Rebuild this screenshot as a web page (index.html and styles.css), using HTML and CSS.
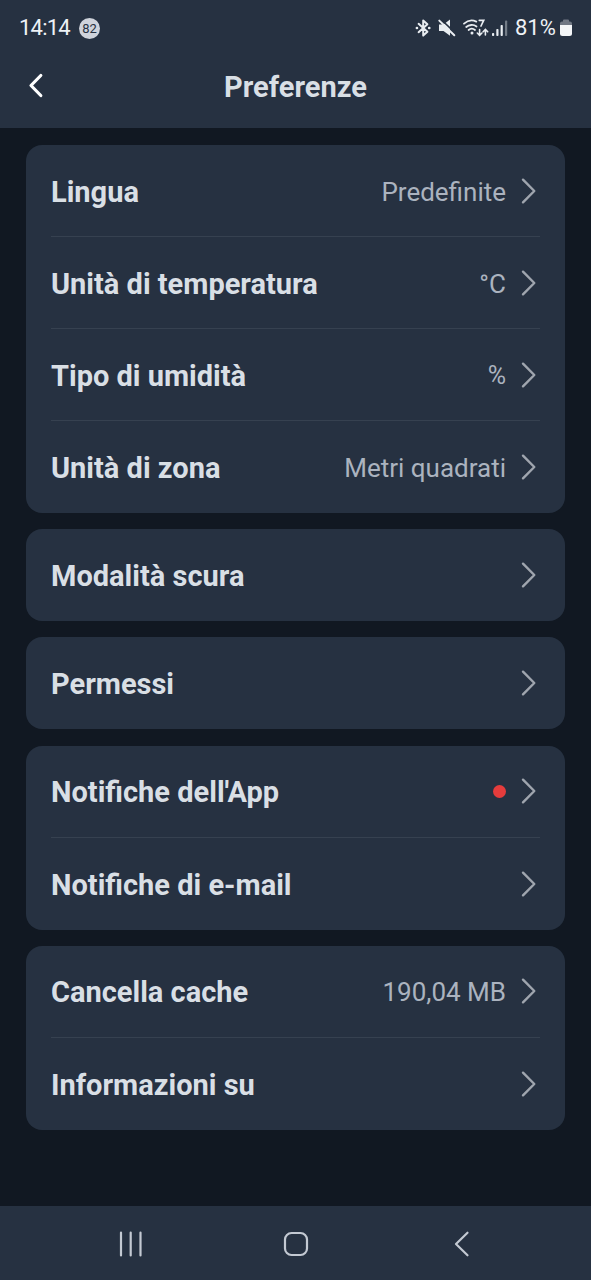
FILE: index.html
```html
<!DOCTYPE html>
<html lang="it">
<head>
<meta charset="utf-8">
<title>Preferenze</title>
<link rel="stylesheet" href="styles.css">
</head>
<body>
<svg class="defs" width="0" height="0" aria-hidden="true">
  <symbol id="chevron" viewBox="0 0 16 26"><path d="M2 1.700 13.300 13 2 24.300"/></symbol>
</svg>
<div class="screen">
  <header class="top">
    <div class="status">
      <span class="clock">14:14</span>
      <span class="badge">82</span>
      <svg class="status-icons" width="94" height="22" viewBox="0 0 94 22">
        <g fill="none" stroke="#e9edf1" stroke-width="2" stroke-linejoin="round" stroke-linecap="round">
          <path d="M3.600 6.800 12.400 14.800 8.200 18.600V3.400L12.400 7.200 3.600 15.200"/>
          <path d="M1.900 11h.1M14.200 11h.1" stroke-width="2.600"/>
        </g>
        <path fill="#e9edf1" d="M24 7.500h4.500l6.500-5v16.300l-6.500-4.800H24z"/>
        <path d="M25.600 2 41.500 17.200" stroke="#263141" stroke-width="1.600"/>
        <path d="M24.300 3.600 39.300 18.300" stroke="#e9edf1" stroke-width="2" stroke-linecap="round"/>
        <g fill="none" stroke="#e9edf1" stroke-width="1.800" stroke-linecap="round">
          <path d="M49 6.700C52.500 3.500 57.500 2.800 61.300 4.600M51.200 10C54 7.600 58.500 7.200 61.500 9.500M53.600 13C55.500 11.400 58 11.400 60 13"/>
          <path d="M64.300 3.300h4.400L66 9" stroke-width="1.700"/>
          <path d="M64.600 12.500v5.500M62.300 16l2.300 2.300 2.300-2.300M70.400 18v-5.500M68.100 14.800l2.300-2.300 2.300 2.300" stroke-width="1.600"/>
        </g>
        <circle cx="57" cy="16" r="1.500" fill="#e9edf1"/>
        <g fill="#e9edf1">
          <rect x="77" y="16" width="2.200" height="3" rx=".8"/><rect x="81.300" y="12" width="2.200" height="7" rx=".8"/><rect x="85.600" y="8" width="2.200" height="11" rx=".8"/><rect x="90" y="3.500" width="2.200" height="15.500" rx=".8" opacity=".4"/>
        </g>
      </svg>
      <span class="percent">81%</span>
      <svg class="battery" width="14" height="18" viewBox="0 0 14 18">
        <path fill="#707783" d="M1 6V4.500Q1 2.500 3 2.500h1V1.500Q4 .5 5 .5h4q1 0 1 1v1h1q2 0 2 2V6z"/>
        <path fill="#f3f5f7" d="M1 6h12v8.500q0 2.500-2.500 2.500h-7Q1 17 1 14.500z"/>
      </svg>
    </div>
    <div class="titlebar">
      <svg class="back" width="16" height="26" viewBox="0 0 16 26"><path d="M12.800 2.500 3 12.500l9.800 10"/></svg>
      <h1>Preferenze</h1>
    </div>
  </header>
  <main class="content">
    <section class="card">
      <div class="row"><span class="label">Lingua</span><span class="value">Predefinite</span><svg class="chev"><use href="#chevron"/></svg></div>
      <div class="row"><span class="label">Unità di temperatura</span><span class="value">°C</span><svg class="chev"><use href="#chevron"/></svg></div>
      <div class="row"><span class="label">Tipo di umidità</span><span class="value percent-sign">%</span><svg class="chev"><use href="#chevron"/></svg></div>
      <div class="row"><span class="label">Unità di zona</span><span class="value">Metri quadrati</span><svg class="chev"><use href="#chevron"/></svg></div>
    </section>
    <section class="card">
      <div class="row"><span class="label">Modalità scura</span><svg class="chev"><use href="#chevron"/></svg></div>
    </section>
    <section class="card">
      <div class="row"><span class="label">Permessi</span><svg class="chev"><use href="#chevron"/></svg></div>
    </section>
    <section class="card">
      <div class="row"><span class="label">Notifiche dell'App</span><span class="dot"></span><svg class="chev"><use href="#chevron"/></svg></div>
      <div class="row"><span class="label">Notifiche di e-mail</span><svg class="chev"><use href="#chevron"/></svg></div>
    </section>
    <section class="card">
      <div class="row"><span class="label">Cancella cache</span><span class="value">190,04 MB</span><svg class="chev"><use href="#chevron"/></svg></div>
      <div class="row"><span class="label">Informazioni su</span><svg class="chev"><use href="#chevron"/></svg></div>
    </section>
  </main>
  <nav class="navbar">
    <svg width="26" height="26" viewBox="0 0 26 26"><path d="M3 1.500v23M12.700 1.500v23M22.500 1.500v23"/></svg>
    <svg width="26" height="26" viewBox="0 0 26 26"><rect x="2" y="2" width="22" height="22" rx="6.500"/></svg>
    <svg width="26" height="26" viewBox="0 0 26 26"><path d="M19.500 1.700 8 13l11.500 11.300"/></svg>
  </nav>
</div>
</body>
</html>
```

FILE: styles.css
```css
* { box-sizing: border-box; }
body { margin: 0; background: #111822; font-family: Roboto, "Liberation Sans", sans-serif; }
.defs { position: absolute; }
svg { flex: none; display: block; }
.screen { width: 591px; height: 1280px; display: flex; flex-direction: column; overflow: hidden; }
.top { height: 128px; flex: none; background: #263141; }
.status { height: 56px; display: flex; align-items: center; padding: 0 18px 0 19px; color: #eef2f6; }
.clock { width: 51px; font-size: 22px; line-height: 26px; letter-spacing: -.8px; white-space: nowrap; }
.badge { width: 21px; height: 21px; margin-left: 9px; border-radius: 50%; background: #cfd3db; color: #263141; font-size: 13px; line-height: 21px; text-align: center; }
.status-icons { margin-left: auto; }
.percent { margin-left: 6px; width: 43px; font-size: 22px; line-height: 26px; }
.battery { margin-left: 1px; }
.titlebar { position: relative; height: 62px; display: flex; align-items: center; justify-content: center; }
.back { position: absolute; left: 28px; top: 17px; fill: none; stroke: #fff; stroke-width: 3.200; stroke-linecap: round; stroke-linejoin: round; }
h1 { margin: 0; font-size: 29px; line-height: 34px; font-weight: 700; color: #d9dfe5; }
.content { flex: 1; padding: 17px 26.500px 0 26px; display: flex; flex-direction: column; gap: 16.200px; }
.card { flex: none; border-radius: 16px; background: #263141; padding: 0 25px; }
.row { height: 92px; display: flex; align-items: center; padding-right: 3px; }
.row:not(:last-child) { border-bottom: 1px solid #364150; }
.label { flex: 1; padding-top: 2px; font-size: 29px; line-height: 34px; font-weight: 700; color: #d9dfe5; white-space: nowrap; }
.value { padding-top: 2px; font-size: 26px; line-height: 32px; color: #abb3bf; white-space: nowrap; }
.percent-sign { font-size: 25px; }
.chev { width: 16px; height: 26px; margin-left: 14.500px; fill: none; stroke: #9fa5ae; stroke-width: 2.400; stroke-linecap: round; stroke-linejoin: round; }
.dot { width: 13px; height: 13px; margin-top: 1px; border-radius: 50%; background: #e53c3c; }
.navbar { height: 74px; flex: none; background: #263141; display: flex; align-items: center; justify-content: space-between; padding: 2px 117px 0 118px; }
.navbar svg { fill: none; stroke: #c3c9d2; stroke-width: 2.200; stroke-linecap: round; stroke-linejoin: round; }
```
